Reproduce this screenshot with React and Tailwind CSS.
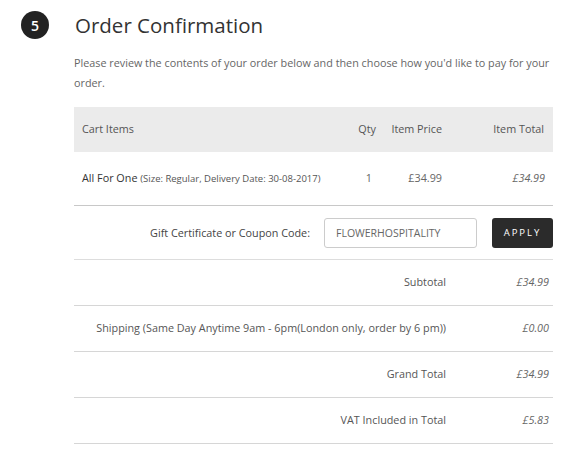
export default function App() {
  const summary = [
    { label: 'Subtotal', value: '£34.99' },
    { label: 'Shipping (Same Day Anytime 9am - 6pm(London only, order by 6 pm))', value: '£0.00' },
    { label: 'Grand Total', value: '£34.99' },
    { label: 'VAT Included in Total', value: '£5.83' },
  ];

  return (
    <div className="min-h-[450px] w-[565px] bg-white text-[#555] font-['Open_Sans',sans-serif]">
      {/* Step heading */}
      <div className="flex items-center pl-[21px] pt-[11px]">
        <div className="flex h-[28px] w-[28px] items-center justify-center rounded-full bg-[#222] text-[14px] font-semibold text-white">
          5
        </div>
        <h1 className="ml-[26px] text-[20.5px] leading-[28px] text-[#333]">Order Confirmation</h1>
      </div>

      <div className="ml-[74px] w-[479px]">
        <p className="mt-[14px] text-[10.8px] leading-[20px] text-[#666]">
          Please review the contents of your order below and then choose how you'd like to pay for your order.
        </p>

        {/* Cart table */}
        <table className="mt-[14px] w-full border-collapse text-[10.8px]">
          <thead>
            <tr className="h-[45px] bg-[#ebebeb] text-[#555]">
              <th className="pl-2 text-left font-normal">Cart Items</th>
              <th className="w-[40px] text-right font-normal">Qty</th>
              <th className="w-[66px] text-right font-normal">Item Price</th>
              <th className="w-[111px] pr-[9px] text-right font-normal">Item Total</th>
            </tr>
          </thead>
          <tbody>
            <tr className="h-[53px] border-b border-[#c8c8c8]">
              <td className="pl-2 whitespace-nowrap text-[#333]">
                All For One <span className="text-[9.5px] text-[#555]">(Size: Regular, Delivery Date: 30-08-2017)</span>
              </td>
              <td className="pr-[4px] text-right text-[#666]">1</td>
              <td className="text-right text-[#666]">£34.99</td>
              <td className="pr-[8px] text-right italic text-[#666]">£34.99</td>
            </tr>
          </tbody>
        </table>

        {/* Coupon */}
        <div className="flex h-[54px] items-center justify-end border-b border-[#ddd] pt-[2px] text-[10.8px]">
          <span className="text-[#444]">Gift Certificate or Coupon Code:</span>
          <input
            className="ml-[14px] h-[30px] w-[153px] rounded-[3px] border border-[#ccc] bg-white px-[11px] text-[10.5px] text-[#666] outline-none"
            defaultValue="FLOWERHOSPITALITY"
          />
          <button className="ml-[15px] h-[30px] w-[61px] rounded-[3px] bg-[#2b2b2b] text-[9.5px] font-medium tracking-[2px] text-white">
            APPLY
          </button>
        </div>

        {/* Totals */}
        {summary.map((row) => (
          <div key={row.label} className="flex h-[46px] items-center border-b border-[#d6d6d6] text-[10.8px]">
            <span className="flex-1 text-right text-[#555]">{row.label}</span>
            <span className="w-[107px] pr-[4px] text-right italic text-[#666]">{row.value}</span>
          </div>
        ))}
      </div>
    </div>
  );
}
